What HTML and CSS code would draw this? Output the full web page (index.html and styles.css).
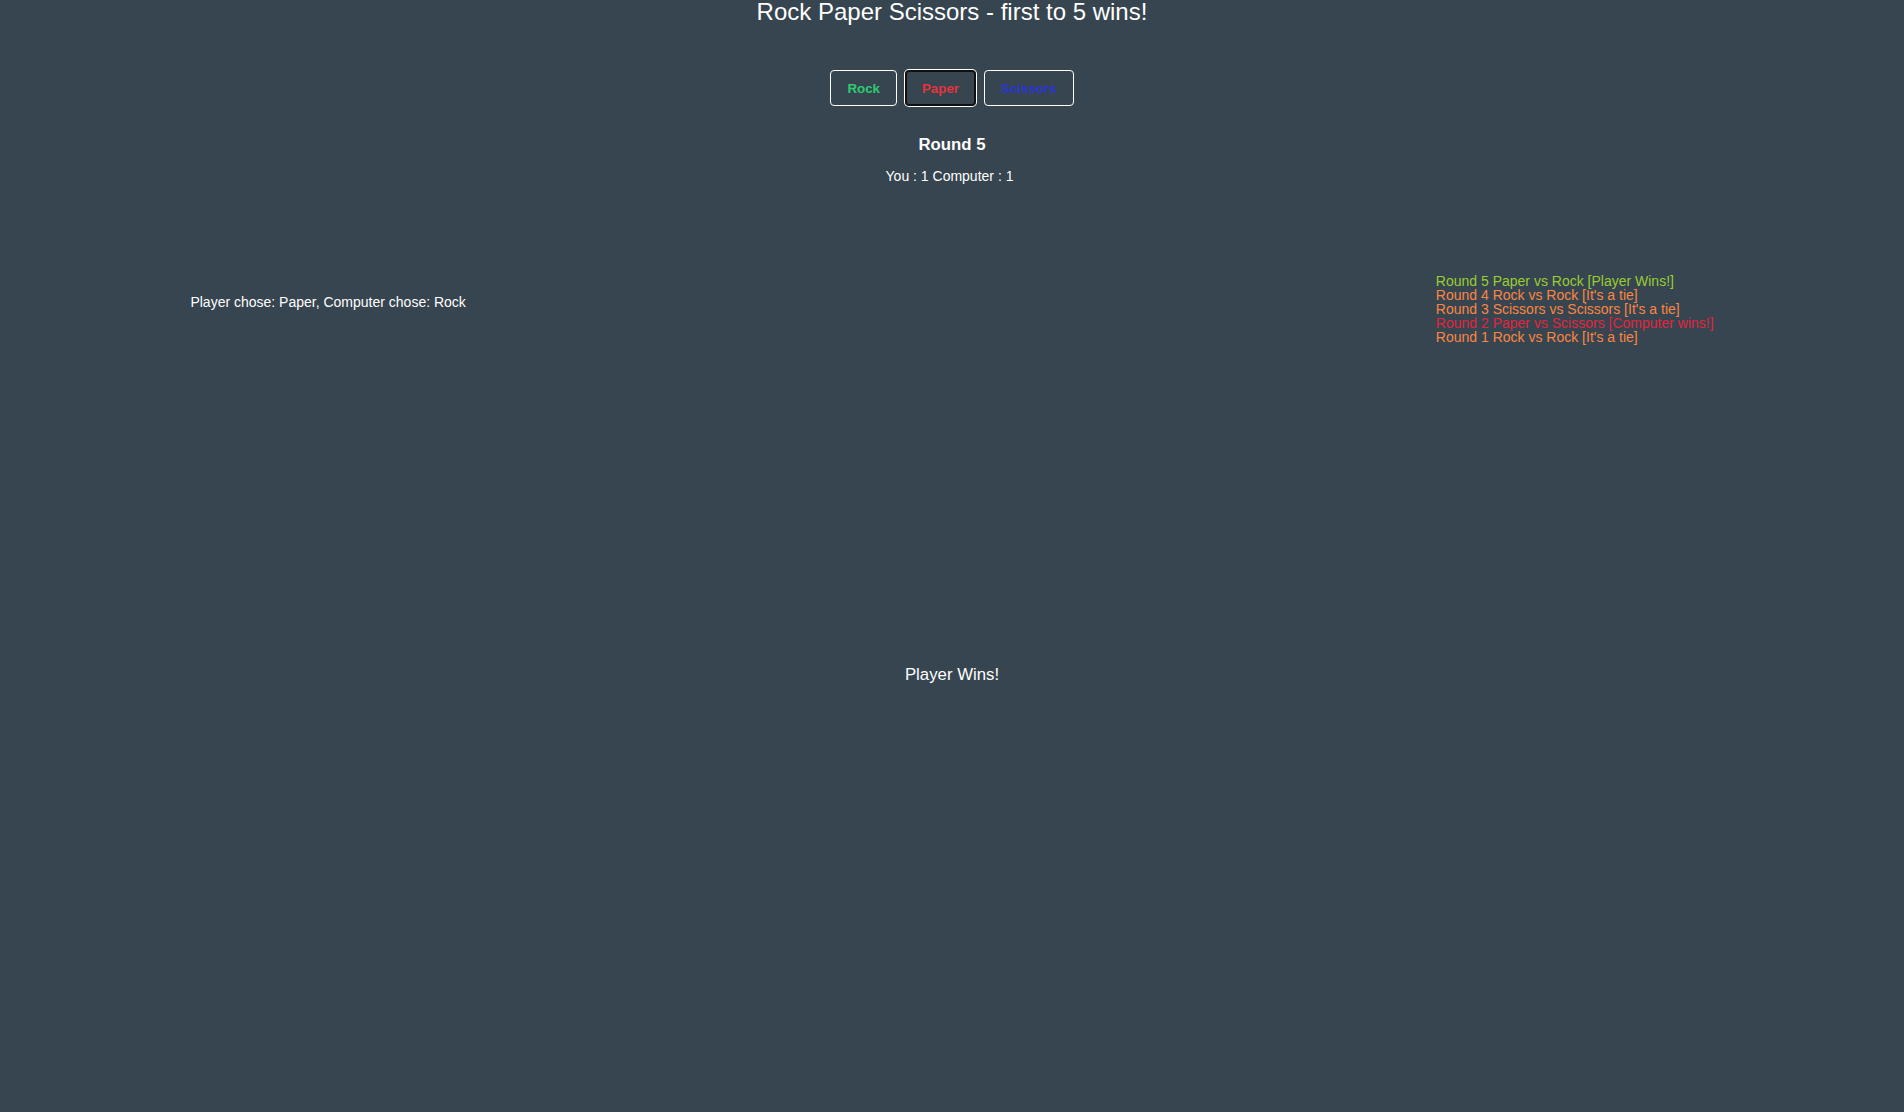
FILE: index.html
```html
<!DOCTYPE html>
<html lang="en">
<head>
<meta charset="utf-8">
<title>Rock Paper Scissors</title>
<link rel="stylesheet" href="styles.css">
</head>
<body>
<div class="page">
  <h1 class="title">Rock Paper Scissors - first to 5 wins!</h1>
  <div class="choices">
    <button class="choice rock">Rock</button>
    <button class="choice paper focused">Paper</button>
    <button class="choice scissors">Scissors</button>
  </div>
  <div class="round">Round 5</div>
  <div class="score">You : 1 Computer : 1</div>
  <div class="board">
    <div class="chosen">Player chose: Paper, Computer chose: Rock</div>
    <div class="log">
      <div class="log-line win">Round 5 Paper vs Rock [Player Wins!]</div>
      <div class="log-line tie">Round 4 Rock vs Rock [It's a tie]</div>
      <div class="log-line tie">Round 3 Scissors vs Scissors [It's a tie]</div>
      <div class="log-line lose">Round 2 Paper vs Scissors [Computer wins!]</div>
      <div class="log-line tie">Round 1 Rock vs Rock [It's a tie]</div>
    </div>
  </div>
  <div class="result">Player Wins!</div>
</div>
</body>
</html>
```

FILE: styles.css
```css
html, body {
  margin: 0;
  padding: 0;
  height: 100%;
}
body {
  background: #36454f;
  color: #ffffff;
  font-family: "Liberation Sans", Arial, sans-serif;
  font-size: 14px;
}
.page {
  min-height: 100%;
  display: flex;
  flex-direction: column;
  align-items: stretch;
}
.title {
  margin: 0;
  font-size: 24px;
  line-height: 24px;
  font-weight: normal;
  text-align: center;
}
.choices {
  margin-top: 46px;
  display: flex;
  justify-content: center;
  gap: 8px;
}
.choice {
  box-sizing: border-box;
  height: 36px;
  padding: 0 16px;
  background: transparent;
  border: 1px solid #ffffff;
  border-radius: 4px;
  font-family: "Liberation Sans", Arial, sans-serif;
  font-size: 13.333px;
  font-weight: bold;
}
.rock { color: #2ecc71; }
.paper { color: #e3343f; }
.scissors { color: #2b35d6; }
.focused {
  border-color: #101010;
  box-shadow: inset 0 0 0 1px #101010, 0 0 0 1px #ffffff;
}
.round {
  margin-top: 29px;
  text-align: center;
  font-size: 16.8px;
  font-weight: bold;
}
.score {
  margin-top: 13px;
  padding-right: 5px;
  text-align: center;
  font-size: 14px;
}
.board {
  margin-top: 90px;
  padding: 0 10%;
  display: flex;
  justify-content: space-between;
  align-items: flex-start;
}
.chosen {
  margin-top: 20px;
}
.log-line {
  line-height: 14px;
}
.win { color: #9acd32; }
.tie { color: #fb8544; }
.lose { color: #e0253f; }
.result {
  margin-top: 321px;
  text-align: center;
  font-size: 16.8px;
}
```
